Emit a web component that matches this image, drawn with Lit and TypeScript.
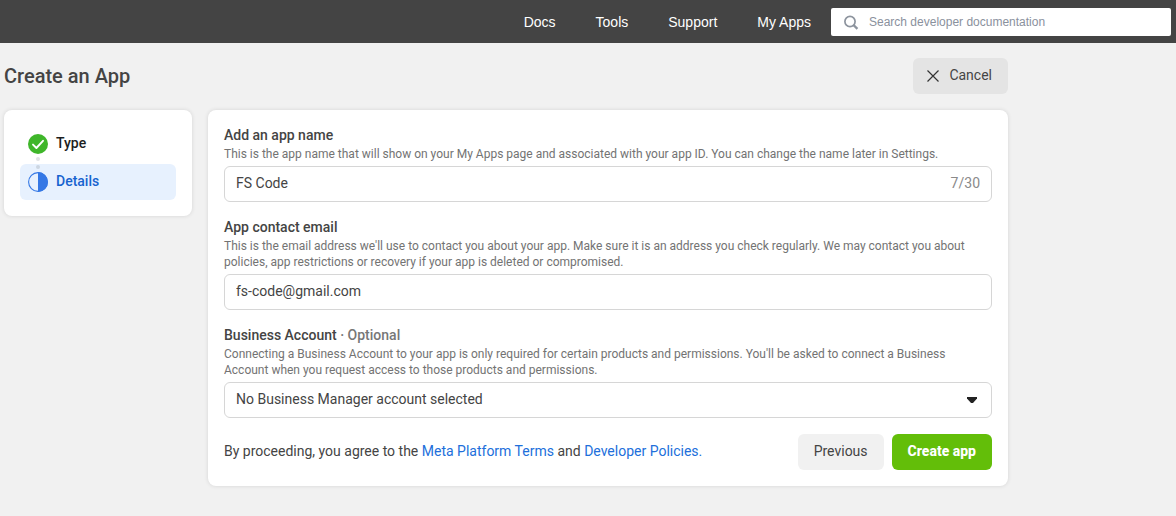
import { LitElement, html, css, svg } from "lit";
import { customElement, property, state } from "lit/decorators.js";
import { classMap } from "lit/directives/class-map.js";

const checkIcon = svg`
  <circle cx="10" cy="10" r="10" fill="#3fb62a"></circle>
  <path d="M5 10.6 L8.4 14 L15 6.8" fill="none" stroke="#fff" stroke-width="1.9" stroke-linecap="round" stroke-linejoin="round"></path>`;

const halfIcon = svg`
  <circle cx="10" cy="10" r="9.4" fill="#e7f1fe" stroke="#3578e5" stroke-width="1.1"></circle>
  <path d="M10 0 A10 10 0 0 1 10 20 Z" fill="#3578e5"></path>`;

@customElement("dev-header")
export class DevHeader extends LitElement {
  static styles = css`
    :host {
      display: block;
      background: #444;
      font-family: "Liberation Sans", Arial, sans-serif;
    }
    .bar {
      display: flex;
      align-items: center;
      justify-content: flex-end;
      gap: 20px;
      padding: 8px 5px 7px 0;
    }
    .nav {
      display: flex;
      gap: 40px;
    }
    .link {
      color: #fff;
      font-size: 14px;
      line-height: 20px;
      text-decoration: none;
      white-space: nowrap;
    }
    .search {
      display: flex;
      align-items: center;
      gap: 10px;
      flex: 0 1 340px;
      box-sizing: border-box;
      height: 28px;
      padding: 0 12px;
      border-radius: 2px;
      background: #fff;
    }
    .glass {
      flex: none;
      width: 16px;
      height: 16px;
    }
    .query {
      flex: 1;
      min-width: 0;
      height: 28px;
      padding: 0;
      border: 0;
      outline: 0;
      background: transparent;
      font-family: inherit;
      font-size: 12px;
      color: #1c1e21;
    }
    .query::placeholder {
      color: #8a919d;
      opacity: 1;
    }
  `;

  render() {
    return html`
      <header class="bar">
        <nav class="nav">
          ${["Docs", "Tools", "Support", "My Apps"].map(
            (name) => html`<a class="link" href="#">${name}</a>`
          )}
        </nav>
        <label class="search">
          <svg class="glass" viewBox="0 0 16 16" aria-hidden="true">
            <circle cx="7" cy="7.5" r="5.1" fill="none" stroke="#8d949e" stroke-width="1.7"></circle>
            <path d="M10.6 11.1 L14.4 14.9" stroke="#8d949e" stroke-width="2.2"></path>
          </svg>
          <input
            class="query"
            type="text"
            aria-label="Search developer documentation"
            placeholder="Search developer documentation"
          />
        </label>
      </header>
    `;
  }
}

interface Step {
  name: string;
  current: boolean;
}

@customElement("step-list")
export class StepList extends LitElement {
  @property({ attribute: false }) steps: Step[] = [];

  static styles = css`
    :host {
      display: block;
    }
    .list {
      display: grid;
      gap: 2px;
      margin: 0;
      padding: 0;
      list-style: none;
    }
    .step {
      position: relative;
      display: flex;
      align-items: center;
      gap: 8px;
      height: 36px;
      padding: 0 8px;
      border-radius: 6px;
      font-size: 14px;
      line-height: 20px;
      font-weight: 500;
      color: #1c1e21;
    }
    .current {
      background: #e7f1fe;
      color: #1763cf;
    }
    .name {
      padding-bottom: 2px;
    }
    .mark {
      width: 20px;
      height: 20px;
    }
    .dots {
      position: absolute;
      left: 16px;
      top: -7px;
      width: 4px;
      height: 12px;
    }
  `;

  render() {
    return html`
      <ol class="list">
        ${this.steps.map(
          (step, i) => html`
            <li class=${classMap({ step: true, current: step.current })}>
              ${i > 0
                ? html`<svg class="dots" viewBox="0 0 4 12" aria-hidden="true">
                    <circle cx="2" cy="2" r="2" fill="#e0e2e5"></circle>
                    <circle cx="2" cy="10" r="2" fill="#ccd6e2"></circle>
                  </svg>`
                : ""}
              <svg class="mark" viewBox="0 0 20 20" aria-hidden="true">
                ${step.current ? halfIcon : checkIcon}
              </svg>
              <span class="name">${step.name}</span>
            </li>
          `
        )}
      </ol>
    `;
  }
}

@customElement("app-root")
export class AppRoot extends LitElement {
  @state() private appName = "FS Code";

  static styles = css`
    :host {
      display: block;
      min-height: 100vh;
      background: #f1f1f1;
      color: #444;
      font-family: Roboto, sans-serif;
      font-size: 14px;
      line-height: 20px;
    }
    .page {
      max-width: 1004px;
      padding: 15px 4px 30px;
    }
    .top {
      display: flex;
      align-items: center;
      justify-content: space-between;
      margin-bottom: 16px;
    }
    .title {
      margin: 0;
      font-size: 20px;
      line-height: 24px;
      font-weight: 500;
    }
    .columns {
      display: grid;
      grid-template-columns: 188px minmax(0, 1fr);
      align-items: start;
      gap: 16px;
    }
    .card {
      padding: 16px;
      border-radius: 8px;
      background: #fff;
      box-shadow: 0 0 4px rgba(0, 0, 0, 0.12);
    }
    .form {
      display: grid;
      gap: 16px;
    }
    .label {
      display: block;
      line-height: 18px;
      padding-bottom: 2px;
      font-weight: 500;
    }
    .optional {
      color: #777;
    }
    .hint {
      margin: 0 0 4px;
      font-size: 12px;
      line-height: 16px;
      color: #737373;
    }
    .box {
      display: flex;
      align-items: center;
      box-sizing: border-box;
      height: 36px;
      border: 1px solid #d6d6d6;
      border-radius: 6px;
      background: #fff;
    }
    .control {
      flex: 1;
      min-width: 0;
      height: 34px;
      padding: 0 11px 2px;
      border: 0;
      outline: 0;
      appearance: none;
      background: transparent;
      font: inherit;
      color: #444;
    }
    .count {
      padding: 0 11px 2px 0;
      color: #8a8a8a;
    }
    .arrow {
      flex: none;
      width: 12px;
      height: 6px;
      margin-right: 13px;
      pointer-events: none;
    }
    .footer {
      display: flex;
      align-items: center;
      justify-content: space-between;
      gap: 16px;
    }
    .terms {
      margin: 0;
      padding-bottom: 2px;
    }
    .link {
      color: #216fdb;
      text-decoration: none;
    }
    .actions {
      display: flex;
      gap: 8px;
    }
    .button {
      display: flex;
      align-items: center;
      gap: 8px;
      height: 36px;
      padding: 0 16px 2px;
      border: 0;
      border-radius: 6px;
      background: #f1f1f1;
      color: #444;
      font: inherit;
      white-space: nowrap;
    }
    .cancel {
      background: #e4e4e4;
      padding-left: 12px;
    }
    .primary {
      background: #63be09;
      color: #fff;
      font-weight: 800;
    }
    .cross {
      width: 16px;
      height: 16px;
    }
  `;

  private rename(e: Event) {
    this.appName = (e.target as HTMLInputElement).value;
  }

  render() {
    return html`
      <dev-header></dev-header>
      <main class="page">
        <div class="top">
          <h1 class="title">Create an App</h1>
          <button class="button cancel" type="button">
            <svg class="cross" viewBox="0 0 16 16" aria-hidden="true">
              <path d="M2.5 3.5 L13.5 14.5 M13.5 3.5 L2.5 14.5" stroke="#333" stroke-width="1.2"></path>
            </svg>
            Cancel
          </button>
        </div>
        <div class="columns">
          <aside class="card">
            <step-list
              .steps=${[
                { name: "Type", current: false },
                { name: "Details", current: true },
              ]}
            ></step-list>
          </aside>
          <form class="card form">
            <div>
              <label class="label" for="name">Add an app name</label>
              <p class="hint">
                This is the app name that will show on your My Apps page and associated with your app ID. You can change the name later in Settings.
              </p>
              <div class="box">
                <input id="name" class="control" type="text" maxlength="30" .value=${this.appName} @input=${this.rename} />
                <span class="count">${this.appName.length}/30</span>
              </div>
            </div>
            <div>
              <label class="label" for="email">App contact email</label>
              <p class="hint">
                This is the email address we'll use to contact you about your app. Make sure it is an address you check regularly. We may contact you about policies, app restrictions or recovery if your app is deleted or compromised.
              </p>
              <div class="box">
                <input id="email" class="control" type="email" value="fs-code@gmail.com" />
              </div>
            </div>
            <div>
              <label class="label" for="account">Business Account <span class="optional">· Optional</span></label>
              <p class="hint">
                Connecting a Business Account to your app is only required for certain products and permissions. You'll be asked to connect a Business Account when you request access to those products and permissions.
              </p>
              <div class="box">
                <select id="account" class="control">
                  <option>No Business Manager account selected</option>
                </select>
                <svg class="arrow" viewBox="0 0 12 6" aria-hidden="true">
                  <path d="M1 0 H11 V1.4 L7 6 H5 L1 1.4 Z" fill="#222"></path>
                </svg>
              </div>
            </div>
            <div class="footer">
              <p class="terms">
                By proceeding, you agree to the <a class="link" href="#">Meta Platform Terms</a> and
                <a class="link" href="#">Developer Policies.</a>
              </p>
              <div class="actions">
                <button class="button" type="button">Previous</button>
                <button class="button primary" type="button">Create app</button>
              </div>
            </div>
          </form>
        </div>
      </main>
    `;
  }
}
